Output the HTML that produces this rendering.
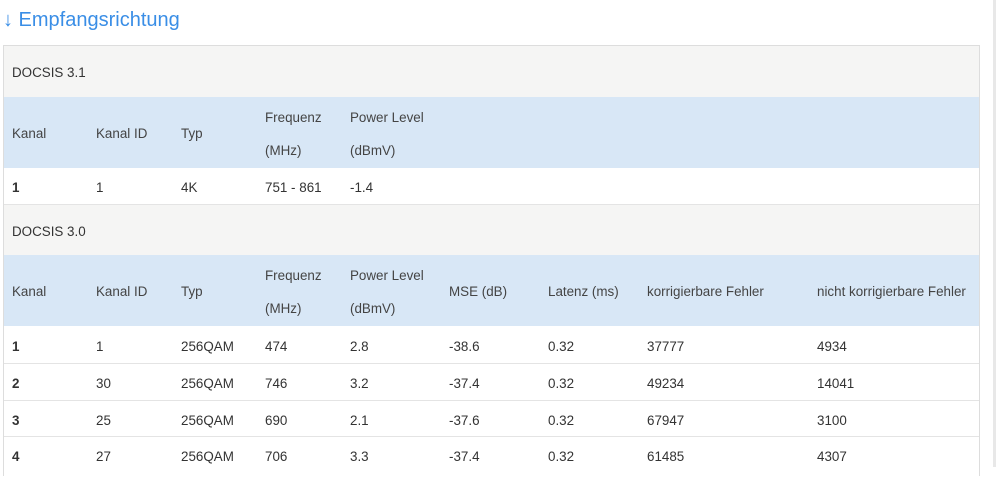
<!DOCTYPE html>
<html><head><meta charset="utf-8"><style>
body{margin:0;width:998px;height:467px;overflow:hidden;background:#fff;font-family:"Liberation Sans",sans-serif;font-size:13.4px;color:#333;position:relative}
.t{position:absolute;left:3px;top:9px;color:#3a8ee6;font-size:20px}
.box{position:absolute;left:3px;top:45px;width:975px;height:430px;border:1px solid #ddd;border-bottom:none}
.r{position:absolute;left:0;width:975px;border-top:1px solid #e4e4e4}
.g{background:#f5f5f4}
.b{background:#d8e7f6;color:#444}
.c{position:absolute;white-space:nowrap}
.sb{position:absolute;left:993px;top:0;width:3px;height:467px;background:#e8e8e8}
</style></head><body>
<div class="t">↓ Empfangsrichtung</div>
<div class="sb"></div>
<div class="box">
<div class="r g" style="top:0;height:51px;border-top:none"><span class="c" style="left:8px;top:19px">DOCSIS 3.1</span></div>
<div class="r b" style="top:51px;height:71px;border-top:none">
<span class="c" style="left:8px;top:29px">Kanal</span><span class="c" style="left:92px;top:29px">Kanal ID</span><span class="c" style="left:177px;top:29px">Typ</span>
<span class="c" style="left:261px;top:13px">Frequenz</span><span class="c" style="left:261px;top:46px">(MHz)</span>
<span class="c" style="left:346px;top:13px">Power Level</span><span class="c" style="left:346px;top:46px">(dBmV)</span></div>
<div class="r" style="top:122px;height:36px;border-top:none">
<b class="c" style="left:8px;top:12px">1</b><span class="c" style="left:92px;top:12px">1</span><span class="c" style="left:177px;top:12px">4K</span><span class="c" style="left:261px;top:12px">751 - 861</span><span class="c" style="left:346px;top:12px">-1.4</span></div>
<div class="r g" style="top:158px;height:50px"><span class="c" style="left:8px;top:19px">DOCSIS 3.0</span></div>
<div class="r b" style="top:209px;height:71px;border-top:none">
<span class="c" style="left:8px;top:29px">Kanal</span><span class="c" style="left:92px;top:29px">Kanal ID</span><span class="c" style="left:177px;top:29px">Typ</span>
<span class="c" style="left:261px;top:13px">Frequenz</span><span class="c" style="left:261px;top:46px">(MHz)</span>
<span class="c" style="left:346px;top:13px">Power Level</span><span class="c" style="left:346px;top:46px">(dBmV)</span>
<span class="c" style="left:445px;top:29px">MSE (dB)</span><span class="c" style="left:544px;top:29px">Latenz (ms)</span><span class="c" style="left:643px;top:29px">korrigierbare Fehler</span><span class="c" style="left:813px;top:29px">nicht korrigierbare Fehler</span></div>
<div class="r" style="top:280px;height:36px;border-top:none"><b class="c" style="left:8px;top:13px">1</b><span class="c" style="left:92px;top:13px">1</span><span class="c" style="left:177px;top:13px">256QAM</span><span class="c" style="left:261px;top:13px">474</span><span class="c" style="left:346px;top:13px">2.8</span><span class="c" style="left:445px;top:13px">-38.6</span><span class="c" style="left:544px;top:13px">0.32</span><span class="c" style="left:643px;top:13px">37777</span><span class="c" style="left:813px;top:13px">4934</span></div>
<div class="r" style="top:317px;height:36px"><b class="c" style="left:8px;top:12px">2</b><span class="c" style="left:92px;top:12px">30</span><span class="c" style="left:177px;top:12px">256QAM</span><span class="c" style="left:261px;top:12px">746</span><span class="c" style="left:346px;top:12px">3.2</span><span class="c" style="left:445px;top:12px">-37.4</span><span class="c" style="left:544px;top:12px">0.32</span><span class="c" style="left:643px;top:12px">49234</span><span class="c" style="left:813px;top:12px">14041</span></div>
<div class="r" style="top:354px;height:36px"><b class="c" style="left:8px;top:12px">3</b><span class="c" style="left:92px;top:12px">25</span><span class="c" style="left:177px;top:12px">256QAM</span><span class="c" style="left:261px;top:12px">690</span><span class="c" style="left:346px;top:12px">2.1</span><span class="c" style="left:445px;top:12px">-37.6</span><span class="c" style="left:544px;top:12px">0.32</span><span class="c" style="left:643px;top:12px">67947</span><span class="c" style="left:813px;top:12px">3100</span></div>
<div class="r" style="top:390px;height:40px"><b class="c" style="left:8px;top:12px">4</b><span class="c" style="left:92px;top:12px">27</span><span class="c" style="left:177px;top:12px">256QAM</span><span class="c" style="left:261px;top:12px">706</span><span class="c" style="left:346px;top:12px">3.3</span><span class="c" style="left:445px;top:12px">-37.4</span><span class="c" style="left:544px;top:12px">0.32</span><span class="c" style="left:643px;top:12px">61485</span><span class="c" style="left:813px;top:12px">4307</span></div>
</div>
</body></html>
